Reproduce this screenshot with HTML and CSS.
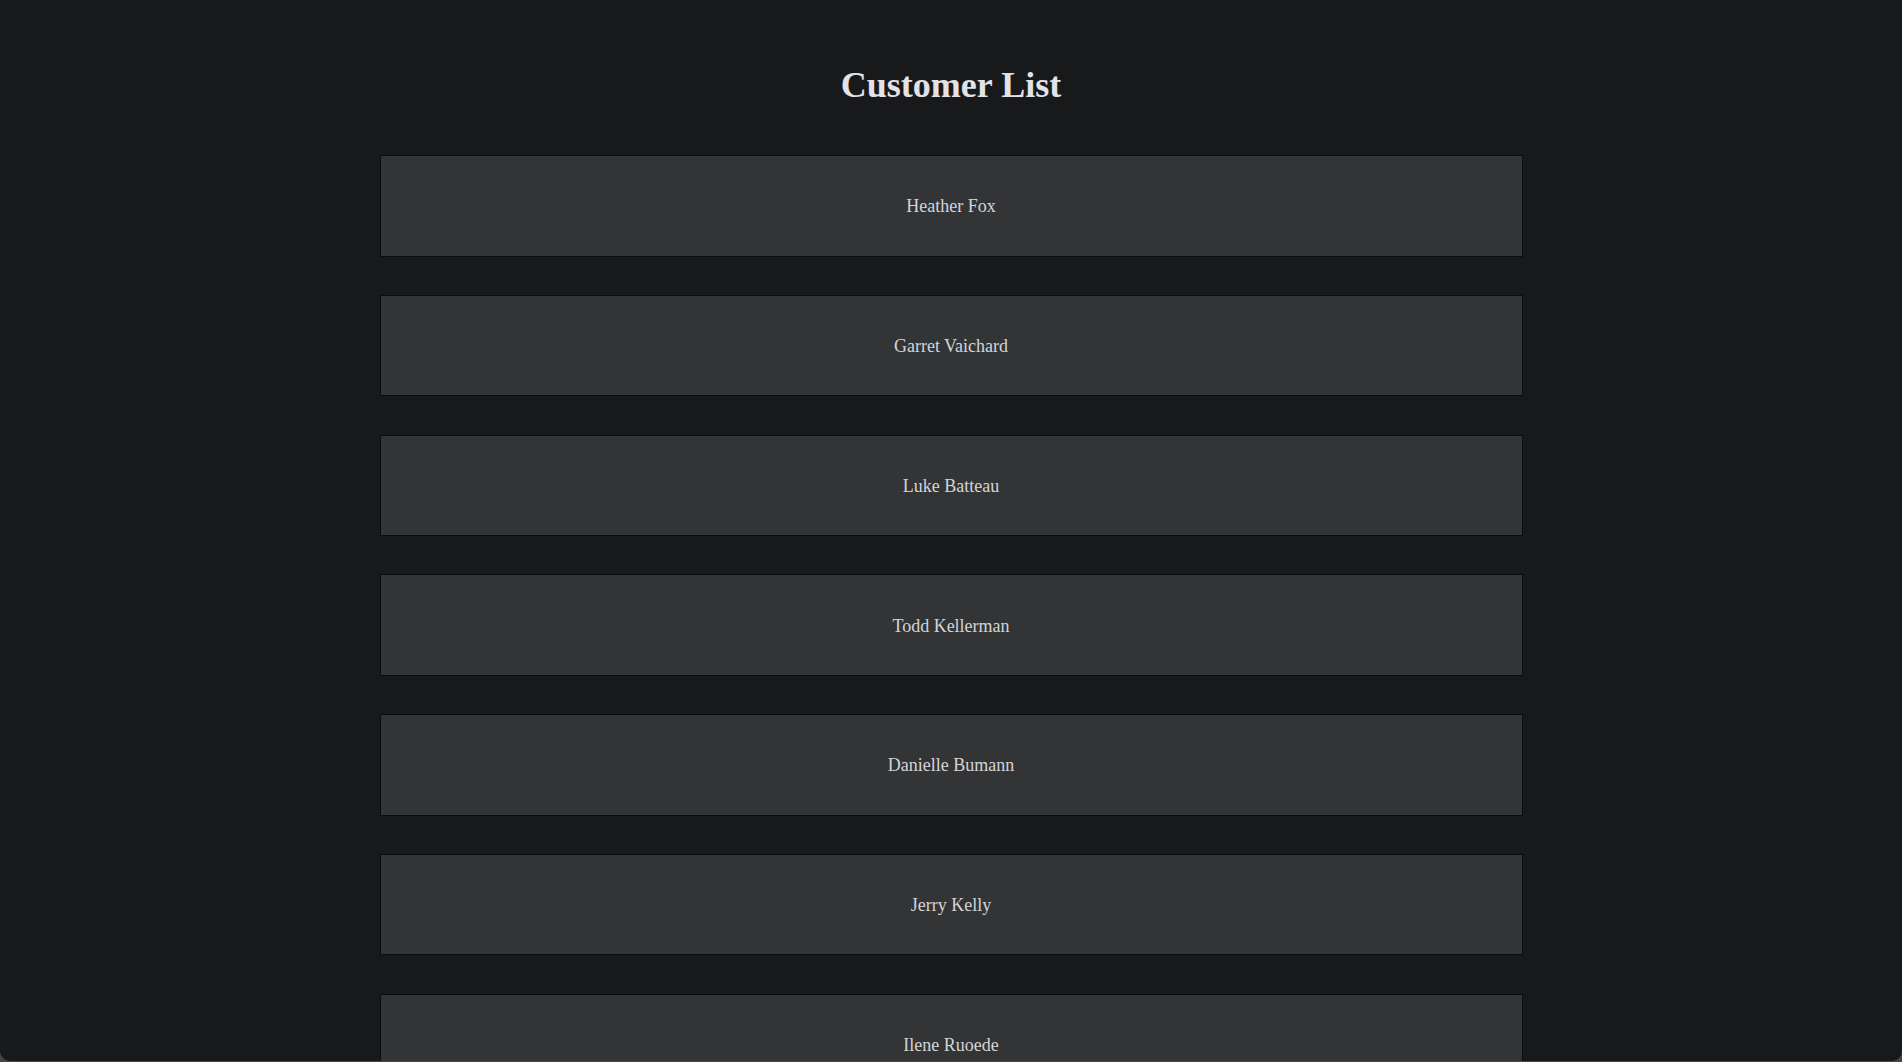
FILE: index.html
```html
<!DOCTYPE html>
<html lang="en">
<head>
<meta charset="utf-8">
<title>Customer List</title>
<link rel="stylesheet" href="styles.css">
</head>
<body>
<div class="page">
  <h1 class="title">Customer List</h1>
  <ul class="customers">
    <li class="customer">Heather Fox</li>
    <li class="customer">Garret Vaichard</li>
    <li class="customer">Luke Batteau</li>
    <li class="customer">Todd Kellerman</li>
    <li class="customer">Danielle Bumann</li>
    <li class="customer">Jerry Kelly</li>
    <li class="customer">Ilene Ruoede</li>
    <li class="customer">Marcus Hale</li>
  </ul>
</div>
</body>
</html>
```

FILE: styles.css
```css
html {
  background: #454547;
  height: 100%;
}
body {
  margin: 0;
  height: 100%;
  font-family: "Liberation Serif", "Times New Roman", serif;
}
.page {
  box-sizing: border-box;
  height: calc(100vh - 1px);
  overflow: hidden;
  background: #18191b;
  border-radius: 0 0 10px 10px;
  padding-top: 65px;
  display: flex;
  flex-direction: column;
  align-items: center;
}
.title {
  margin: 0 0 50px;
  font-size: 36px;
  font-weight: bold;
  line-height: 40px;
  color: #e2e2e8;
  text-align: center;
}
.customers {
  list-style: none;
  margin: 0;
  padding: 0;
  width: 1143px;
  display: flex;
  flex-direction: column;
  gap: 38.3px;
  flex-shrink: 0;
}
.customer {
  box-sizing: border-box;
  height: 101.5px;
  padding-top: 2px;
  display: flex;
  align-items: center;
  justify-content: center;
  background: #333436;
  border: 1px solid #0c0c0d;
  color: #d4d4d6;
  font-size: 18px;
  flex-shrink: 0;
}
```
